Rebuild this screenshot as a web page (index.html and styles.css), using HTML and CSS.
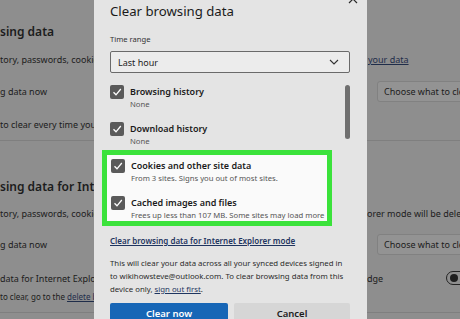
FILE: index.html
```html
<!DOCTYPE html>
<html lang="en">
<head>
    <meta charset="UTF-8">
    <meta name="viewport" content="width=device-width, initial-scale=1.0">
    <title>Clear browsing data</title>
    <link rel="stylesheet" href="styles.css">
</head>
<body>
    <div class="page">
        <section class="section first">
            <div class="row head"><span class="left">sing data</span></div>
            <div class="row desc">
                <span class="left">tory, passwords, cookies, and other browsing data will be deleted</span>
                <span class="right"><span class="bg-link">your data</span></span>
            </div>
            <div class="row ctl">
                <span class="left">g data now</span>
                <span class="right"><span class="bg-btn">Choose what to clear</span></span>
            </div>
            <div class="row desc">
                <span class="left">to clear every time you close the browser</span>
            </div>
        </section>

        <section class="section second">
            <div class="row head"><span class="left">sing data for Internet Explorer</span></div>
            <div class="row desc">
                <span class="left">tory, passwords, cookies, and other data in Internet Expl</span>
                <span class="right">orer mode will be deleted</span>
            </div>
            <div class="row ctl">
                <span class="left">g data now</span>
                <span class="right"><span class="bg-btn">Choose what to clear</span></span>
            </div>
            <div class="row desc">
                <span class="left">data for Internet Explorer every time you close Microsoft E</span>
                <span class="right toggle-cell">dge <span class="toggle"><span class="knob"></span></span></span>
            </div>
            <div class="row note">
                <span class="left">to clear, go to the <span class="bg-link">delete browsing history</span></span>
            </div>
        </section>
    </div>

    <div class="dialog">
        <svg class="close" width="10" height="10" viewBox="0 0 10 10">
            <path d="M1 1 L9 9 M9 1 L1 9" stroke="#2a2a2a" stroke-width="1.2" fill="none"/>
        </svg>
        <h1 class="title">Clear browsing data</h1>
        <div class="label">Time range</div>
        <div class="select">
            <span>Last hour</span>
            <svg width="10" height="6" viewBox="0 0 10 6">
                <path d="M1 1 L5 5 L9 1" stroke="#333" stroke-width="1.1" fill="none"/>
            </svg>
        </div>

        <div class="list">
            <div class="scrollbar"></div>
            <div class="item">
                <span class="check"><svg width="14" height="14" viewBox="0 0 14 14"><path d="M3.5 7.2 L6 9.8 L10.8 4" stroke="#fff" stroke-width="1.3" fill="none"/></svg></span>
                <div>
                    <div class="item-title">Browsing history</div>
                    <div class="item-sub">None</div>
                </div>
            </div>
            <div class="item">
                <span class="check"><svg width="14" height="14" viewBox="0 0 14 14"><path d="M3.5 7.2 L6 9.8 L10.8 4" stroke="#fff" stroke-width="1.3" fill="none"/></svg></span>
                <div>
                    <div class="item-title">Download history</div>
                    <div class="item-sub">None</div>
                </div>
            </div>

            <div class="highlight">
                <div class="item">
                    <span class="check"><svg width="14" height="14" viewBox="0 0 14 14"><path d="M3.5 7.2 L6 9.8 L10.8 4" stroke="#fff" stroke-width="1.3" fill="none"/></svg></span>
                    <div>
                        <div class="item-title">Cookies and other site data</div>
                        <div class="item-sub">From 3 sites. Signs you out of most sites.</div>
                    </div>
                </div>
                <div class="item">
                    <span class="check"><svg width="14" height="14" viewBox="0 0 14 14"><path d="M3.5 7.2 L6 9.8 L10.8 4" stroke="#fff" stroke-width="1.3" fill="none"/></svg></span>
                    <div>
                        <div class="item-title">Cached images and files</div>
                        <div class="item-sub">Frees up less than 107 MB. Some sites may load more</div>
                    </div>
                </div>
            </div>
        </div>

        <div class="ie-link">Clear browsing data for Internet Explorer mode</div>
        <p class="info">This will clear your data across all your synced devices signed in to wikihowsteve@outlook.com. To clear browsing data from this device only, <span class="info-link">sign out first</span>.</p>

        <div class="actions">
            <button class="btn primary">Clear now</button>
            <button class="btn">Cancel</button>
        </div>
    </div>
</body>
</html>
```

FILE: styles.css
```css
* {
    margin: 0;
    padding: 0;
    box-sizing: border-box;
}

body {
    font-family: 'Noto Sans', sans-serif;
    background-color: #8e8e8e;
    color: #1c1c1c;
    width: 460px;
    height: 319px;
    overflow: hidden;
    position: relative;
}

/* dimmed settings page behind the dialog */
.page {
    padding-top: 20px;
}

.section {
    border-bottom: 1px solid #7f7f7f;
}

.section.first {
    padding-bottom: 7px;
}

.section.second {
    padding-top: 34px;
    padding-bottom: 8px;
}

.row {
    display: grid;
    grid-template-columns: 367px 93px;
    align-items: center;
    white-space: nowrap;
}

.row .left,
.row .right {
    overflow: hidden;
}

.row.head {
    height: 22px;
    font-size: 12px;
    font-weight: 600;
}

.row.desc {
    height: 18px;
    margin-top: 8px;
    font-size: 9px;
}

.row.ctl {
    height: 22px;
    margin-top: 12px;
    font-size: 9px;
}

.first .row.desc:last-child {
    margin-top: 13px;
}

.second .row.desc {
    margin-top: 7px;
}

.second .row.ctl {
    margin-top: 11px;
}

.second .row.desc:nth-child(4) {
    margin-top: 14px;
}

.row.note {
    height: 16px;
    margin-top: 1px;
    font-size: 8px;
}

.bg-link {
    color: #1f2d4a;
    text-decoration: underline;
}

.right .bg-link {
    margin-left: 1px;
}

.bg-btn {
    display: block;
    margin-left: 10px;
    width: 110px;
    height: 21px;
    line-height: 19px;
    padding-left: 6px;
    background-color: #939393;
    border: 1px solid #818181;
    border-radius: 3px;
}

.toggle-cell {
    display: flex;
    align-items: center;
    overflow: visible;
}

.toggle {
    margin-left: auto;
    margin-right: -16px;
    width: 30px;
    height: 14px;
    border: 1px solid #232323;
    border-radius: 7px;
    display: flex;
    align-items: center;
    padding-left: 3px;
}

.knob {
    width: 8px;
    height: 8px;
    border-radius: 50%;
    background-color: #1f1f1f;
}

/* dialog */
.dialog {
    position: absolute;
    left: 94px;
    top: 0;
    width: 273px;
    height: 319px;
    background-color: #e4e4e4;
    padding: 0 17px 0 16px;
}

.close {
    position: absolute;
    left: 254px;
    top: -6px;
}

.title {
    margin-top: 1px;
    font-size: 13.2px;
    font-weight: 400;
    line-height: 20px;
    color: #1a1a1a;
}

.label {
    margin-top: 12px;
    font-size: 7.6px;
    line-height: 12px;
    color: #333;
}

.select {
    margin-top: 6px;
    height: 22px;
    border: 1px solid #6a6a6a;
    border-radius: 2px;
    background-color: #ececec;
    display: flex;
    align-items: center;
    justify-content: space-between;
    padding: 0 10px 0 7px;
    font-size: 9px;
    color: #1c1c1c;
}

.list {
    position: relative;
    margin-top: 7px;
    padding-top: 5px;
}

.scrollbar {
    position: absolute;
    right: 0;
    top: 5px;
    width: 5px;
    height: 54px;
    border-radius: 3px;
    background-color: #6f6f6f;
}

.item {
    display: grid;
    grid-template-columns: 14px 1fr;
    column-gap: 6px;
    white-space: nowrap;
}

.item + .item {
    margin-top: 12px;
}

.check {
    width: 14px;
    height: 14px;
    background-color: #5a5a5a;
    border-radius: 2px;
}

.check svg {
    display: block;
}

.item-title {
    font-size: 9px;
    font-weight: 600;
    line-height: 14px;
    color: #1b1b1b;
}

.item-sub {
    font-size: 7.7px;
    line-height: 11px;
    color: #555;
}

.highlight {
    margin-top: 3px;
    margin-left: -8px;
    width: 230px;
    border: 5px solid #3be23b;
    background-color: #fafafa;
    padding: 4px 0 0 4px;
    overflow: hidden;
}

.ie-link {
    margin-top: 9px;
    font-size: 8px;
    font-weight: 600;
    line-height: 12px;
    color: #1f3560;
    text-decoration: underline;
    white-space: nowrap;
}

.info {
    margin-top: 10px;
    font-size: 7.8px;
    line-height: 13px;
    color: #2b2b2b;
}

.info-link {
    color: #1f3560;
    text-decoration: underline;
}

.actions {
    margin-top: 7px;
    display: grid;
    grid-template-columns: 118px 116px;
    column-gap: 6px;
}

.btn {
    height: 26px;
    border: none;
    border-radius: 2px;
    font-family: 'Noto Sans', sans-serif;
    font-size: 9.5px;
    font-weight: 600;
    line-height: 14px;
    background-color: #d6d6d6;
    color: #1c1c1c;
    padding: 4px 0 8px;
}

.btn.primary {
    background-color: #1766b6;
    color: #fff;
}
```
